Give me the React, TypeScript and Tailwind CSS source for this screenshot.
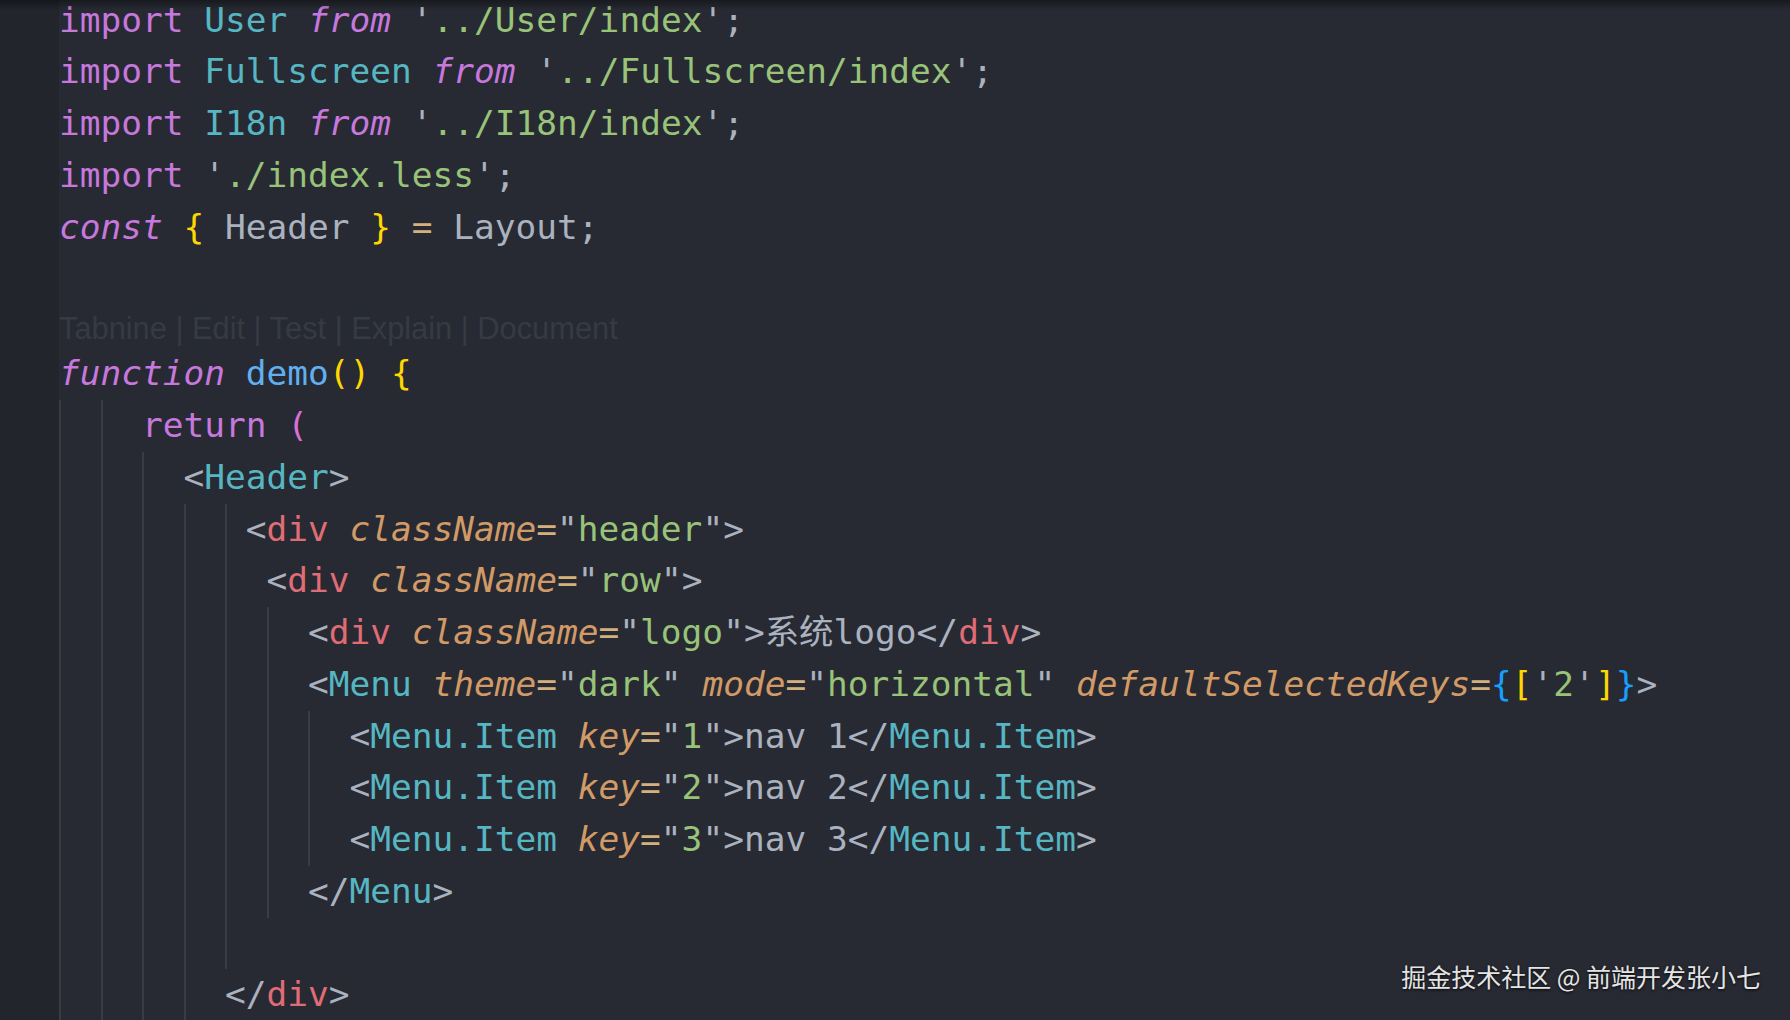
import React from 'react';
import clsx from 'clsx';

type Tok = [string, string];

const P = 'text-[#abb2bf]';
const KW = 'text-[#c678dd]';
const KWI = 'text-[#c678dd] italic';
const CLS = 'text-[#56b6c2]';
const STR = 'text-[#98c379]';
const FN = 'text-[#61afef]';
const TAG = 'text-[#e06c75]';
const ATTR = 'text-[#d19a66] italic';
const OP = 'text-[#d4b17c]';
const GOLD = 'text-[#ffd700]';
const ORCHID = 'text-[#da70d6]';
const BLUE = 'text-[#179fff]';

type Line = { col: number; guides: number[]; toks: Tok[] };

const imp = (name: string, path: string): Line => ({
    col: 0,
    guides: [],
    toks: [
        ['import', KW],
        [' ', P],
        [name, CLS],
        [' ', P],
        ['from', KWI],
        [' ', P],
        ["'", P],
        [path, STR],
        ["'", P],
        [';', P],
    ],
});

const attr = (name: string, value: string): Tok[] => [
    [' ', P],
    [name, ATTR],
    ['=', OP],
    ['"', P],
    [value, STR],
    ['"', P],
];

const menuItem = (k: string): Line => ({
    col: 14,
    guides: [0, 2, 4, 6, 8, 10, 12],
    toks: [
        ['<', P],
        ['Menu.Item', CLS],
        ...attr('key', k),
        ['>', P],
        [`nav ${k}`, P],
        ['</', P],
        ['Menu.Item', CLS],
        ['>', P],
    ],
});

const topLines: Line[] = [
    imp('User', '../User/index'),
    imp('Fullscreen', '../Fullscreen/index'),
    imp('I18n', '../I18n/index'),
    {
        col: 0,
        guides: [],
        toks: [
            ['import', KW],
            [' ', P],
            ["'", P],
            ['./index.less', STR],
            ["'", P],
            [';', P],
        ],
    },
    {
        col: 0,
        guides: [],
        toks: [
            ['const', KWI],
            [' ', P],
            ['{', GOLD],
            [' Header ', P],
            ['}', GOLD],
            [' ', P],
            ['=', OP],
            [' Layout;', P],
        ],
    },
    { col: 0, guides: [], toks: [] },
];

const bodyLines: Line[] = [
    {
        col: 0,
        guides: [],
        toks: [
            ['function', KWI],
            [' ', P],
            ['demo', FN],
            ['()', GOLD],
            [' ', P],
            ['{', GOLD],
        ],
    },
    { col: 4, guides: [0, 2], toks: [['return', KW], [' ', P], ['(', ORCHID]] },
    { col: 6, guides: [0, 2, 4], toks: [['<', P], ['Header', CLS], ['>', P]] },
    {
        col: 9,
        guides: [0, 2, 4, 6, 8],
        toks: [['<', P], ['div', TAG], ...attr('className', 'header'), ['>', P]],
    },
    {
        col: 10,
        guides: [0, 2, 4, 6, 8],
        toks: [['<', P], ['div', TAG], ...attr('className', 'row'), ['>', P]],
    },
    {
        col: 12,
        guides: [0, 2, 4, 6, 8, 10],
        toks: [
            ['<', P],
            ['div', TAG],
            ...attr('className', 'logo'),
            ['>', P],
            ['系统logo', P],
            ['</', P],
            ['div', TAG],
            ['>', P],
        ],
    },
    {
        col: 12,
        guides: [0, 2, 4, 6, 8, 10],
        toks: [
            ['<', P],
            ['Menu', CLS],
            ...attr('theme', 'dark'),
            ...attr('mode', 'horizontal'),
            [' ', P],
            ['defaultSelectedKeys', ATTR],
            ['=', OP],
            ['{', BLUE],
            ['[', GOLD],
            ["'", P],
            ['2', STR],
            ["'", P],
            [']', GOLD],
            ['}', BLUE],
            ['>', P],
        ],
    },
    menuItem('1'),
    menuItem('2'),
    menuItem('3'),
    { col: 12, guides: [0, 2, 4, 6, 8, 10], toks: [['</', P], ['Menu', CLS], ['>', P]] },
    { col: 0, guides: [0, 2, 4, 6, 8], toks: [] },
    { col: 8, guides: [0, 2, 4, 6], toks: [['</', P], ['div', TAG], ['>', P]] },
];

const CodeLine = ({ line }: { line: Line }) => {
    const width = Math.max(line.col, ...line.guides.map((g) => g + 1), 0);
    return (
        <div className="flex h-[51.75px] items-center whitespace-pre">
            {Array.from({ length: width }).map((_, c) => (
                <span
                    key={c}
                    className={clsx(
                        'h-full w-[20.75px] shrink-0',
                        line.guides.includes(c) && 'border-l-2 border-[#383c46]'
                    )}
                />
            ))}
            {line.toks.map(([t, cls], i) => (
                <span key={i} className={cls}>
                    {t}
                </span>
            ))}
        </div>
    );
};

export default function App() {
    return (
        <div className="relative flex h-[1020px] w-full overflow-hidden bg-[#272a33]">
            {/* gutter */}
            <div className="w-[59px] shrink-0 bg-[#22252c]" />

            <div className="-mt-[5.4px] flex-1 font-['DejaVu_Sans_Mono','Noto_Sans_CJK_SC',monospace] text-[34.47px]">
                {topLines.map((l, i) => (
                    <CodeLine key={i} line={l} />
                ))}

                {/* codelens */}
                <div className="flex h-[43.3px] items-center pt-[4px] font-['Liberation_Sans',sans-serif] text-[30.8px] text-[#363a43]">
                    Tabnine | Edit | Test | Explain | Document
                </div>

                {bodyLines.map((l, i) => (
                    <CodeLine key={i} line={l} />
                ))}
            </div>

            {/* scroll shadow */}
            <div className="pointer-events-none absolute inset-x-0 top-0 h-[10px] bg-gradient-to-b from-black/40 to-transparent" />

            <div className="absolute right-[29px] bottom-[25px] font-['Noto_Sans_CJK_SC',sans-serif] text-[25px] text-[#e4e4e4] [text-shadow:0_1px_3px_rgba(0,0,0,0.9)]">
                掘金技术社区 @ 前端开发张小七
            </div>
        </div>
    );
}
